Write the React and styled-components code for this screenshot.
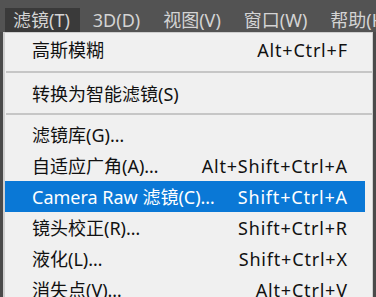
import React from "react";
import styled, { createGlobalStyle } from "styled-components";

const GlobalStyle = createGlobalStyle`
  html, body {
    margin: 0;
    padding: 0;
    background: #535353;
    overflow: hidden;
  }
  body {
    font-family: "Noto Sans", "Noto Sans CJK SC", sans-serif;
  }
`;

const Screen = styled.div`
  width: 376px;
  height: 297px;
  overflow: hidden;
  background: #535353;
  display: flex;
  flex-direction: column;
`;

const MenuBar = styled.div`
  height: 32px;
  display: flex;
  align-items: flex-end;
  padding-left: 5px;
  gap: 5px;
  flex-shrink: 0;
`;

const BarItem = styled.div`
  height: 24px;
  padding: 0 10px 0 8px;
  display: flex;
  align-items: center;
  font-size: 18px;
  color: #d4d4d4;
  background: ${p => (p.$active ? "#3a3a3a" : "transparent")};
  white-space: nowrap;
  line-height: 1;
`;

const Body = styled.div`
  flex: 1;
  display: flex;
  padding-left: 3px;
  padding-right: 3px;
  background: #4a4a4a;
`;

const Menu = styled.div`
  flex: 1;
  background: #f0f0f0;
  border-left: 2px solid #cfcfcf;
  border-top: 1px solid #cfcfcf;
  border-right: 1px solid #cfcfcf;
  padding-top: 1px;
  display: flex;
  flex-direction: column;
`;

const Item = styled.div`
  height: 31px;
  flex-shrink: 0;
  margin-right: 7px;
  display: flex;
  align-items: center;
  justify-content: space-between;
  padding: 0 18px 0 27px;
  font-size: 18px;
  line-height: 1;
  white-space: nowrap;
  color: ${p => (p.$selected ? "#ffffff" : "#111111")};
  background: ${p => (p.$selected ? "#0a78d6" : "transparent")};
`;

const Shortcut = styled.span`
  letter-spacing: 0.8px;
  margin-right: -0.8px;
`;

const Separator = styled.div`
  flex-shrink: 0;
  height: ${p => p.$h}px;
  display: flex;
  align-items: ${p => (p.$top ? "flex-start" : "center")};
  padding-left: 1px;
  &::before {
    content: "";
    display: block;
    width: 100%;
    height: 2px;
    margin-top: ${p => p.$top || 0}px;
    background: #c6c6c6;
  }
`;

const bar = [
  { label: "滤镜(T)", active: true },
  { label: "3D(D)" },
  { label: "视图(V)" },
  { label: "窗口(W)" },
  { label: "帮助(H)" }
];

export default function App() {
  return (
    <Screen>
      <GlobalStyle />
      <MenuBar>
        {bar.map(b => (
          <BarItem key={b.label} $active={b.active}>
            {b.label}
          </BarItem>
        ))}
      </MenuBar>
      <Body>
        <Menu>
          <Item>
            <span>高斯模糊</span>
            <Shortcut>Alt+Ctrl+F</Shortcut>
          </Item>
          <Separator $h={13} $top={6} />
          <Item>
            <span>转换为智能滤镜(S)</span>
          </Item>
          <Separator $h={10} />
          <Item>
            <span>滤镜库(G)…</span>
          </Item>
          <Item>
            <span>自适应广角(A)…</span>
            <Shortcut>Alt+Shift+Ctrl+A</Shortcut>
          </Item>
          <Item $selected>
            <span>Camera Raw 滤镜(C)…</span>
            <Shortcut>Shift+Ctrl+A</Shortcut>
          </Item>
          <Item>
            <span>镜头校正(R)…</span>
            <Shortcut>Shift+Ctrl+R</Shortcut>
          </Item>
          <Item>
            <span>液化(L)…</span>
            <Shortcut>Shift+Ctrl+X</Shortcut>
          </Item>
          <Item>
            <span>消失点(V)…</span>
            <Shortcut>Alt+Ctrl+V</Shortcut>
          </Item>
        </Menu>
      </Body>
    </Screen>
  );
}
